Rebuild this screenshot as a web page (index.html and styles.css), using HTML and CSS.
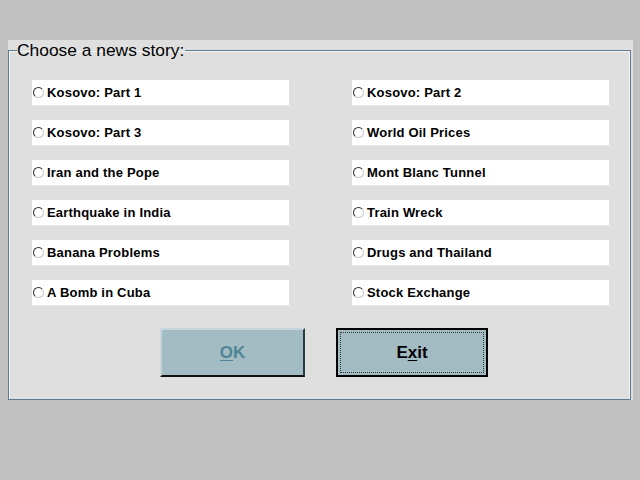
FILE: index.html
```html
<!DOCTYPE html>
<html>
<head>
<meta charset="utf-8">
<link rel="stylesheet" href="styles.css">
</head>
<body>
<div class="panel">
  <fieldset class="group">
    <legend class="legend">Choose a news story:</legend>
    <div class="options">
      <label class="opt"><span class="radio"></span>Kosovo: Part 1</label>
      <label class="opt"><span class="radio"></span>Kosovo: Part 2</label>
      <label class="opt"><span class="radio"></span>Kosovo: Part 3</label>
      <label class="opt"><span class="radio"></span>World Oil Prices</label>
      <label class="opt"><span class="radio"></span>Iran and the Pope</label>
      <label class="opt"><span class="radio"></span>Mont Blanc Tunnel</label>
      <label class="opt"><span class="radio"></span>Earthquake in India</label>
      <label class="opt"><span class="radio"></span>Train Wreck</label>
      <label class="opt"><span class="radio"></span>Banana Problems</label>
      <label class="opt"><span class="radio"></span>Drugs and Thailand</label>
      <label class="opt"><span class="radio"></span>A Bomb in Cuba</label>
      <label class="opt"><span class="radio"></span>Stock Exchange</label>
    </div>
    <div class="buttons">
      <div class="btn btn-ok"><span class="u">O</span>K</div>
      <div class="btn btn-exit"><span class="focus">E<span class="u">x</span>it</span></div>
    </div>
  </fieldset>
</div>
</body>
</html>
```
FILE: styles.css
```css
html, body {
  margin: 0;
  padding: 0;
  background: #c0c0c0;
  width: 640px;
  height: 480px;
  overflow: hidden;
  font-family: "Liberation Sans", Arial, sans-serif;
}

.panel {
  margin: 40px 0 0 8px;
  width: 625px;
  height: 360px;
  background: #dfdfdf;
  padding-top: 1px;
  box-sizing: border-box;
}

.group {
  margin: 0;
  width: 623px;
  height: 359px;
  box-sizing: border-box;
  border: 1px solid #5d7c93;
  box-shadow: inset 1px 1px 0 #f4f4f4, inset -1px 0 0 #f4f4f4;
  padding: 0 0 0 8px;
}

.legend {
  font-size: 17.4px;
  line-height: 18px;
  color: #000;
  padding: 0 1px 0 0;
  margin: 0;
}

.options {
  display: grid;
  grid-template-columns: 257px 257px;
  grid-auto-rows: 25px;
  column-gap: 63px;
  row-gap: 15px;
  margin: 21px 0 0 15px;
}

.opt {
  background: #fff;
  display: flex;
  align-items: center;
  font-size: 13px;
  font-weight: bold;
  letter-spacing: 0.2px;
  color: #000;
  padding-left: 1px;
  box-shadow: 0 1px 0 #e8e8e8;
}

.radio {
  width: 11px;
  height: 11px;
  box-sizing: border-box;
  border-radius: 50%;
  border: 1px solid;
  border-color: #303030 #c8c8c8 #c8c8c8 #303030;
  background: #fff;
  margin: 0 3px 0 0;
  flex: none;
}

.buttons {
  display: flex;
  gap: 31px;
  margin: 23px 0 0 143px;
}

.btn {
  height: 49px;
  box-sizing: border-box;
  background: #a3bbc2;
  display: flex;
  align-items: center;
  justify-content: center;
  font-size: 17px;
  font-weight: bold;
}

.btn-ok {
  width: 145px;
  color: #4f8596;
  border-top: 2px solid #c6d6da;
  border-left: 2px solid #c6d6da;
  border-right: 2px solid #2a3a40;
  border-bottom: 2px solid #111;
}

.btn-exit {
  width: 152px;
  color: #000;
  border: 2px solid #000;
  padding: 2px;
}

.focus {
  flex: 1;
  align-self: stretch;
  display: flex;
  align-items: center;
  justify-content: center;
  border: 1px dotted #333;
}

.u {
  text-decoration: underline;
  text-underline-offset: 2px;
}
```
